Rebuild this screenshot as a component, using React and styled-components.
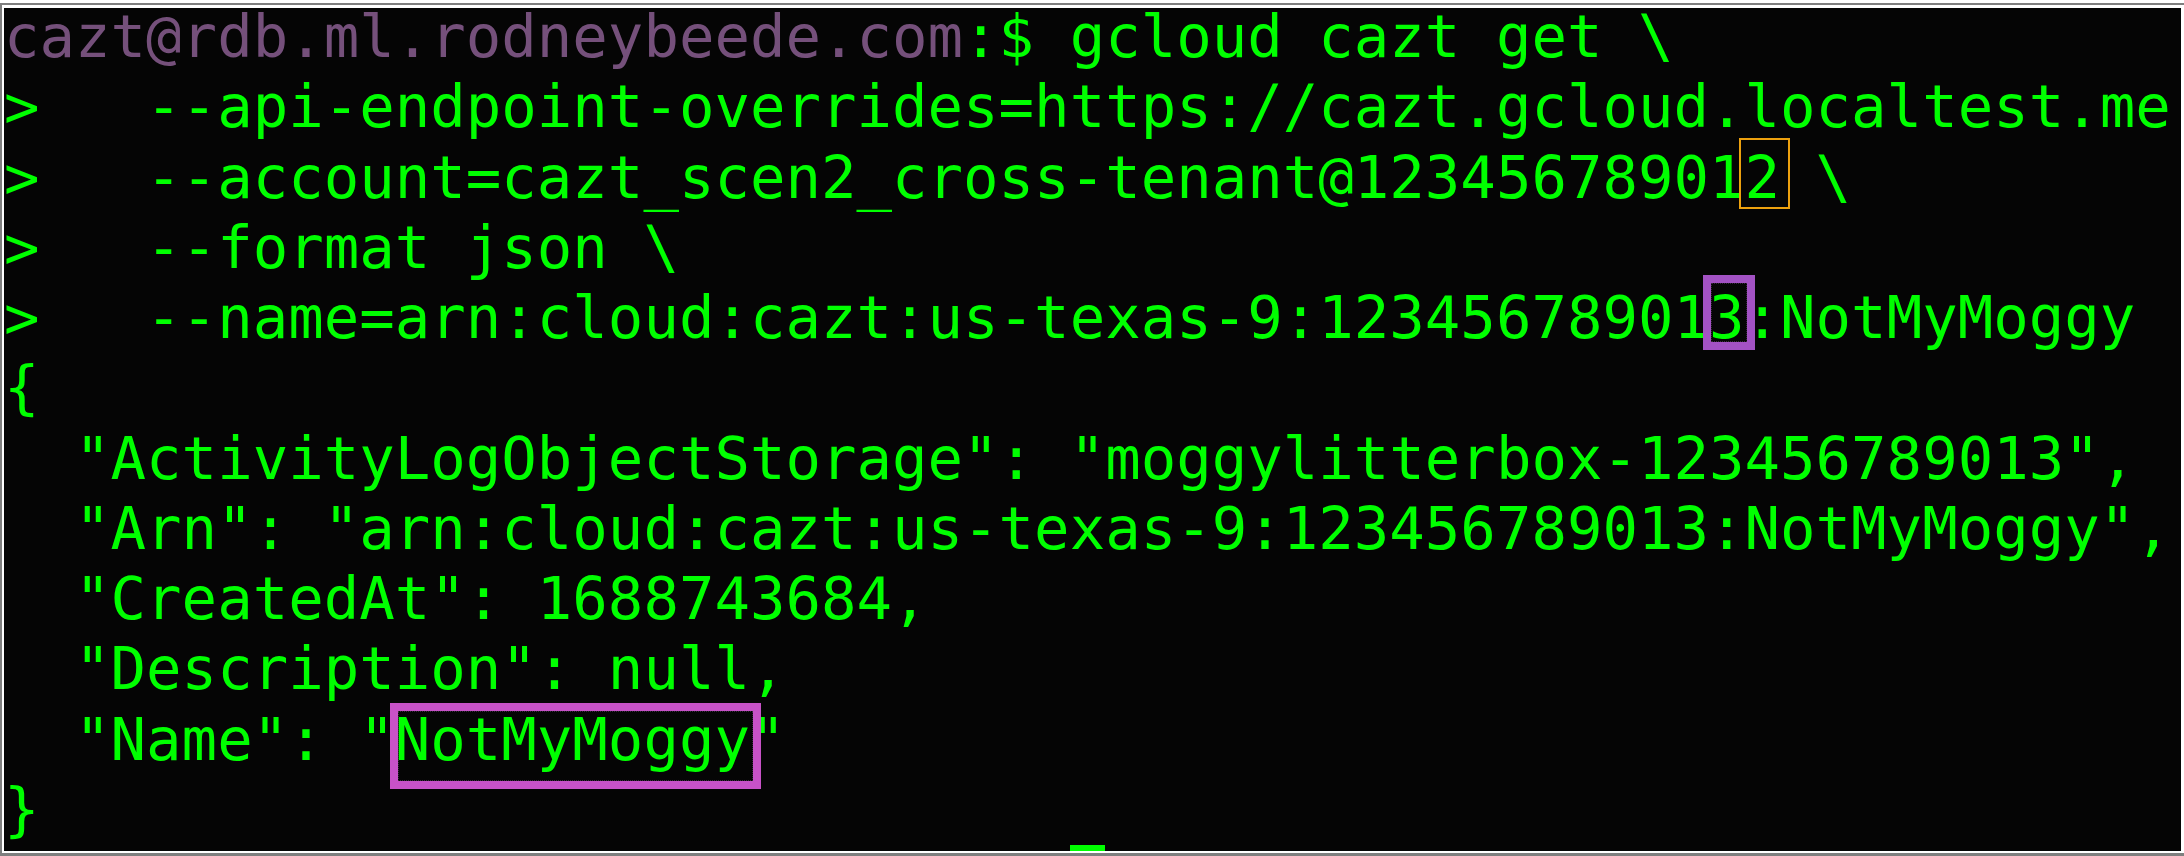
import React from "react"
import styled, { createGlobalStyle } from "styled-components"

const GlobalStyle = createGlobalStyle`
  html, body {
    margin: 0;
    padding: 0;
    background: #ffffff;
    overflow: hidden;
  }
`

const Frame = styled.div`
  width: 2184px;
  height: 856px;
  box-sizing: border-box;
  padding-top: 3px;
  background: #ffffff;
`

const Window = styled.div`
  box-sizing: border-box;
  height: 853px;
  border-top: 2px solid #7f7f7f;
  border-left: 2px solid #7f7f7f;
  border-bottom: 3px solid #7f7f7f;
  padding: 3px 3px 2px 2px;
  background: #ffffff;
`

const Screen = styled.div`
  display: flow-root;
  height: 843px;
  background: #050505;
`

// terminal text; the first row sits a little above the black area, as in the capture
const Output = styled.div`
  margin-top: -6px;
  font-family: "DejaVu Sans Mono", "Liberation Mono", monospace;
  font-size: 59px;
  line-height: 70.25px;
  color: #00ff00;
  white-space: pre;
`

const Line = styled.div`
  height: 70.25px;
`

const Prompt = styled.span`
  color: #75507b;
`

const Mark = styled.span`
  position: relative;

  &::after {
    content: "";
    position: absolute;
    top: ${p => p.$top}px;
    bottom: ${p => p.$bottom}px;
    left: ${p => p.$left}px;
    right: ${p => p.$right}px;
    border: ${p => p.$weight}px solid ${p => p.$color};
    outline: ${p => (p.$weight > 3 ? "1px dotted #3a2a3e" : "none")};
    outline-offset: -${p => p.$weight + 1}px;
  }
`

// only the top sliver of the block cursor is inside the capture
const CursorRow = styled.div`
  height: 6px;
  padding-left: ${p => p.$col}ch;
`

const Cursor = styled.div`
  width: 35px;
  height: 6px;
  background: #00ff00;
`

export default function App() {
  return (
    <Frame>
      <GlobalStyle />
      <Window>
        <Screen>
          <Output>
            <Line>
              <Prompt>cazt@rdb.ml.rodneybeede.com</Prompt>:$ gcloud cazt get \
            </Line>
            <Line>{">   --api-endpoint-overrides=https://cazt.gcloud.localtest.me"}</Line>
            <Line>
              {">   --account=cazt_scen2_cross-tenant@12345678901"}
              <Mark $top={-5} $bottom={3} $left={-6} $right={-10} $weight={2} $color="#eda10e">2</Mark>
              {" \\"}
            </Line>
            <Line>{">   --format json \\"}</Line>
            <Line>
              {">   --name=arn:cloud:cazt:us-texas-9:12345678901"}
              <Mark $top={-8} $bottom={2} $left={-6} $right={-10} $weight={8} $color="#a352c4">3</Mark>
              {":NotMyMoggy"}
            </Line>
            <Line>{"{"}</Line>
            <Line>{'  "ActivityLogObjectStorage": "moggylitterbox-123456789013",'}</Line>
            <Line>{'  "Arn": "arn:cloud:cazt:us-texas-9:123456789013:NotMyMoggy",'}</Line>
            <Line>{'  "CreatedAt": 1688743684,'}</Line>
            <Line>{'  "Description": null,'}</Line>
            <Line>
              {'  "Name": "'}
              <Mark $top={-2} $bottom={-15} $left={-5} $right={-11} $weight={8} $color="#c752c7">NotMyMoggy</Mark>
              {'"'}
            </Line>
            <Line>{"}"}</Line>
            <CursorRow $col={30}>
              <Cursor />
            </CursorRow>
          </Output>
        </Screen>
      </Window>
    </Frame>
  )
}
